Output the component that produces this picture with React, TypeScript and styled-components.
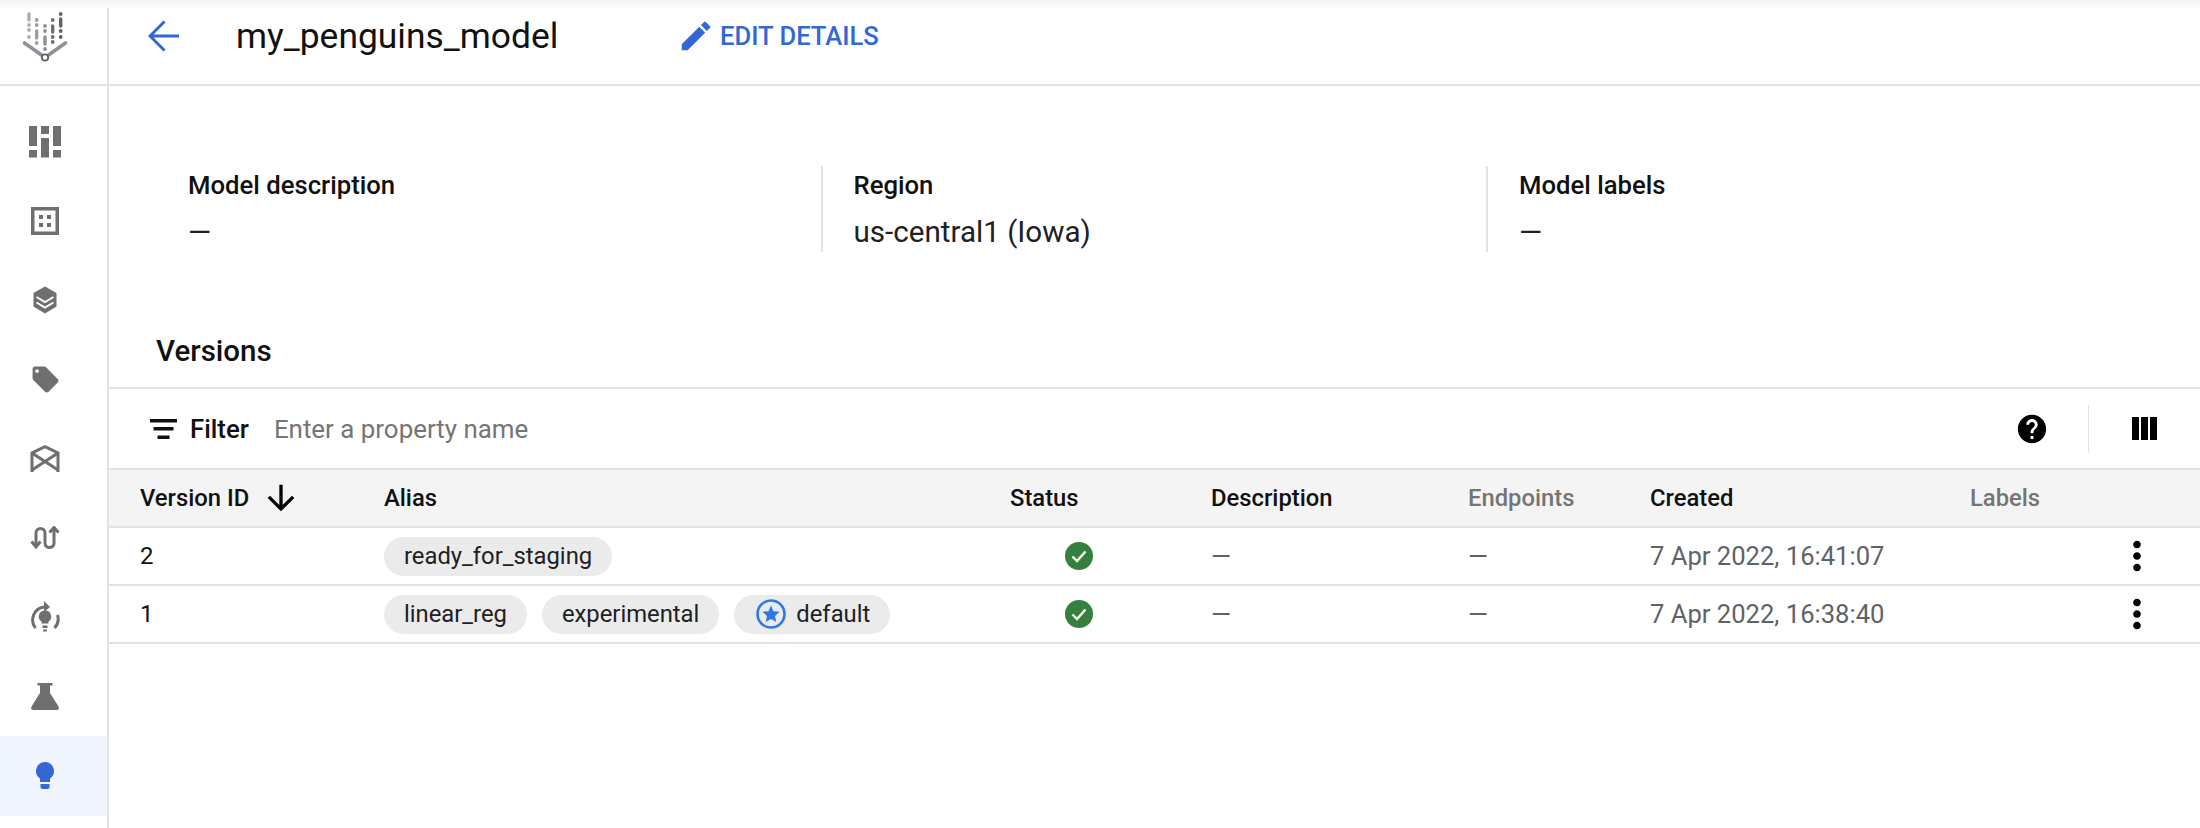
import React from 'react';
import styled, { createGlobalStyle } from 'styled-components';

const GlobalStyle = createGlobalStyle`
  html, body {
    margin: 0;
    padding: 0;
    background: #fff;
    font-family: Roboto, "Liberation Sans", sans-serif;
    color: #111;
  }
`;

const Page = styled.div`
  display: flex;
  width: 2200px;
  height: 828px;
  overflow: hidden;
  position: relative;
  background: #fff;

  &::before {
    content: '';
    position: absolute;
    top: 0;
    left: 0;
    right: 0;
    height: 8px;
    background: linear-gradient(#f3f3f3, #fff);
  }
`;

const Sidebar = styled.nav`
  width: 107px;
  flex: none;
  border-right: 2px solid #e2e2e2;
  display: flex;
  flex-direction: column;
`;

const LogoBox = styled.div`
  height: 86px;
  box-sizing: border-box;
  border-bottom: 2px solid #e2e2e2;
  padding-top: 12px;
  position: relative;
`;

const NavList = styled.div`
  padding-top: 16px;
  display: flex;
  flex-direction: column;
`;

const NavItem = styled.div<{ $active?: boolean }>`
  height: 79.3px;
  box-sizing: border-box;
  padding-right: 17px;
  display: flex;
  align-items: center;
  justify-content: center;
  color: ${(p) => (p.$active ? '#3367d6' : '#6f6f6f')};
  background: ${(p) => (p.$active ? '#f0f4fd' : 'transparent')};
`;

const Main = styled.main`
  flex: 1;
  min-width: 0;
  display: flex;
  flex-direction: column;
`;

const Header = styled.header`
  height: 86px;
  box-sizing: border-box;
  border-bottom: 2px solid #e2e2e2;
  display: flex;
  align-items: center;
  padding: 0 0 12px 39px;
  position: relative;
`;

const BackIcon = styled.svg`
  width: 32px;
  height: 32px;
  fill: none;
  stroke: #3367d6;
  stroke-width: 3;
  flex: none;
`;

const Title = styled.h1`
  margin: 0 0 0 56px;
  font-size: 35.4px;
  font-weight: 400;
  color: #111;
  width: 441px;
  white-space: nowrap;
`;

const EditButton = styled.div`
  display: flex;
  align-items: center;
  gap: 5px;
  color: #3367d6;
  font-size: 25.6px;
  font-weight: 500;
  white-space: nowrap;
  svg {
    width: 38px;
    height: 38px;
    fill: #3367d6;
  }
`;

const Details = styled.section`
  display: flex;
  margin: 80px 0 0 48px;
  height: 86px;
`;

const DetailColumn = styled.div<{ $first?: boolean }>`
  width: 667.5px;
  box-sizing: border-box;
  padding-left: 31px;
  border-left: ${(p) => (p.$first ? '2px solid transparent' : '2px solid #e2e2e2')};
  margin-left: -2px;
  display: flex;
  flex-direction: column;
`;

const DetailLabel = styled.div`
  font-size: 25.7px;
  font-weight: 500;
  line-height: 32px;
  margin-top: 3px;
  color: #111;
`;

const DetailValue = styled.div`
  font-size: 29.6px;
  line-height: 32px;
  margin-top: 15px;
  color: #202124;
`;

const SectionTitle = styled.h2`
  margin: 0;
  padding: 82px 0 0 47px;
  height: 53px;
  font-size: 29.5px;
  line-height: 34px;
  font-weight: 500;
  color: #111;
`;

const FilterBar = styled.div`
  height: 83px;
  box-sizing: border-box;
  border-top: 2px solid #e2e2e2;
  border-bottom: 2px solid #e2e2e2;
  display: flex;
  align-items: center;
  padding-left: 41px;
  position: relative;
`;

const FilterIcon = styled.svg`
  width: 27px;
  height: 20px;
  fill: #111;
  flex: none;
`;

const FilterLabel = styled.span`
  margin-left: 13px;
  font-size: 25.8px;
  font-weight: 500;
  color: #111;
`;

const FilterInput = styled.span`
  margin-left: 25px;
  font-size: 25.9px;
  color: #757575;
  flex: 1;
`;

const HelpIcon = styled.svg`
  width: 34px;
  height: 34px;
  fill: #000;
  flex: none;
`;

const ToolbarDivider = styled.div`
  width: 1px;
  height: 48px;
  background: #e2e2e2;
  margin: 0 43px 0 39px;
`;

const ColumnsIcon = styled.svg`
  width: 25px;
  height: 23px;
  fill: #000;
  flex: none;
  margin-right: 43px;
`;

const Row = styled.div<{ $head?: boolean }>`
  display: grid;
  grid-template-columns: 244px 626px 201px 257px 182px 320px 140px 54px;
  align-items: center;
  height: 58px;
  box-sizing: border-box;
  padding-left: 31px;
  border-bottom: 2px solid #e2e2e2;
  background: ${(p) => (p.$head ? '#f4f4f4' : '#fff')};
`;

const HeadCell = styled.div<{ $muted?: boolean }>`
  font-weight: 500;
  font-size: 23.8px;
  color: ${(p) => (p.$muted ? '#757575' : '#111')};
  display: flex;
  align-items: center;
  gap: 12px;
  svg {
    width: 40px;
    height: 40px;
    fill: #000;
  }
`;

const Cell = styled.div<{ $muted?: boolean }>`
  font-size: ${(p) => (p.$muted ? '25.6px' : '24px')};
  color: ${(p) => (p.$muted ? '#5f6368' : '#111')};
  white-space: nowrap;
`;

const StatusCell = styled.div`
  padding-left: 55px;
  display: flex;
  svg {
    width: 28px;
    height: 28px;
  }
`;

const Chips = styled.div`
  display: flex;
  gap: 15px;
`;

const Chip = styled.span`
  display: inline-flex;
  align-items: center;
  height: 39px;
  padding: 0 20px;
  border-radius: 20px;
  background: #ebebeb;
  font-size: 23.8px;
  color: #202124;
  white-space: nowrap;
  gap: 10px;
`;

const DefaultChip = styled(Chip)`
  padding-left: 22px;
  svg {
    width: 30px;
    height: 30px;
  }
`;

const Kebab = styled.svg`
  width: 46px;
  height: 46px;
  fill: #000;
  justify-self: center;
`;

const LogoMark = styled.svg`
  display: block;
  width: 90px;
  height: 58px;
`;

const dash = '—';

const logoColumns = [
  { x: 29, color: '#a9adb1', dots: [25, 30, 37], bar: [14, 20] },
  { x: 36.7, color: '#9a9ea2', dots: [20, 25, 43], bar: [31, 38] },
  { x: 45, color: '#8e9296', dots: [26, 31, 49], bar: [37, 44] },
  { x: 52.7, color: '#6d7074', dots: [20, 37, 42], bar: [26, 32] },
  { x: 60.7, color: '#5f6368', dots: [14, 31, 37], bar: [19, 26] },
];

function Logo() {
  return (
    <LogoMark viewBox="0 12 90 58">
      {logoColumns.map((col) => (
        <g key={col.x} fill={col.color} stroke={col.color}>
          {col.dots.map((y) => (
            <circle key={y} cx={col.x} cy={y} r="1.9" stroke="none" />
          ))}
          <line x1={col.x} x2={col.x} y1={col.bar[0]} y2={col.bar[1]} strokeWidth="3.4" strokeLinecap="round" />
        </g>
      ))}
      <path d="M24.5 43 L41.5 55" stroke="#8e9196" strokeWidth="3.6" strokeLinecap="round" fill="none" />
      <path d="M48.5 55 L65.5 43" stroke="#8e9196" strokeWidth="3.6" strokeLinecap="round" fill="none" />
      <circle cx="45" cy="57.5" r="3.2" fill="#fff" stroke="#5f6368" strokeWidth="1.8" />
    </LogoMark>
  );
}

function BoardsIcon() {
  return (
    <svg width="32" height="32" viewBox="0 0 32 32" fill="currentColor">
      <rect x="0" y="0" width="8" height="20" />
      <rect x="0" y="24" width="8" height="7.5" />
      <rect x="12" y="0" width="8" height="8" />
      <rect x="12" y="12" width="8" height="19.5" />
      <rect x="24" y="0" width="8" height="20" />
      <rect x="24" y="24" width="8" height="7.5" />
    </svg>
  );
}

function GridIcon() {
  return (
    <svg width="28" height="28" viewBox="0 0 28 28" fill="currentColor">
      <path fillRule="evenodd" d="M0 0h28v28H0zM3.5 3.5v21h21v-21z" />
      <rect x="8" y="8" width="4" height="4" />
      <rect x="16" y="8" width="4" height="4" />
      <rect x="8" y="16" width="4" height="4" />
      <rect x="16" y="16" width="4" height="4" />
    </svg>
  );
}

function LayersIcon() {
  return (
    <svg width="24" height="28" viewBox="0 0 24 28" fill="currentColor">
      <path d="M12 0.5 L23.5 7 V20.5 L12 27.5 L0.5 20.5 V7 Z" />
      <path d="M3.5 11 L12 16 L20.5 11 M3.5 16.5 L12 21.5 L20.5 16.5" fill="none" stroke="#fff" strokeWidth="2" />
    </svg>
  );
}

function TagIcon() {
  return (
    <svg width="31" height="31" viewBox="0 0 24 24" fill="currentColor">
      <path d="M21.41 11.58l-9-9C12.05 2.22 11.55 2 11 2H4c-1.1 0-2 .9-2 2v7c0 .55.22 1.05.59 1.42l9 9c.36.36.86.58 1.41.58.55 0 1.05-.22 1.41-.59l7-7c.37-.36.59-.86.59-1.41 0-.55-.23-1.06-.59-1.42zM5.5 7C4.67 7 4 6.33 4 5.5S4.67 4 5.5 4 7 4.67 7 5.5 6.33 7 5.5 7z" />
    </svg>
  );
}

function EndpointIcon() {
  return (
    <svg width="30" height="28" viewBox="0 0 30 28" fill="none" stroke="currentColor" strokeWidth="3">
      <path d="M2 27 V8 L15 1.7 L28 8 V27" />
      <path d="M2 8 L28 25 M28 8 L2 25" />
    </svg>
  );
}

function PipelineIcon() {
  return (
    <svg width="30" height="24" viewBox="0 0 30 24" fill="none" stroke="currentColor" strokeWidth="3">
      <path d="M6 20 V7 C6 1 15 1 15 7 V17 C15 23 24 23 24 17 V3" />
      <path d="M1.5 15.5 L6 21 L10.5 15.5 M19.5 6.5 L24 1.5 L28.5 6.5" />
    </svg>
  );
}

function TrainingIcon() {
  return (
    <svg width="30" height="32" viewBox="0 0 30 32" fill="currentColor">
      <path d="M5.5 27 A13 13 0 0 1 14 6 M24.5 27 A13 13 0 0 0 27.5 14" fill="none" stroke="currentColor" strokeWidth="3" />
      <path d="M14 0 L20 6 L14 11 Z" />
      <path d="M15 9.5 a6 6 0 0 1 3.5 11 v2 h-7 v-2 a6 6 0 0 1 3.5 -11z" />
      <rect x="12.5" y="24.5" width="5" height="2.5" />
      <rect x="13" y="28.5" width="4" height="2" />
    </svg>
  );
}

function FlaskIcon() {
  return (
    <svg width="28" height="27" viewBox="0 0 28 27" fill="currentColor">
      <path d="M6.5 0 H21.5 V2.5 H19 V10 L27.5 23.5 Q28.8 27 26 27 H2 Q-.8 27 .5 23.5 L9 10 V2.5 H6.5Z" />
    </svg>
  );
}

function BulbIcon() {
  return (
    <svg width="18" height="28" viewBox="0 0 18 28" fill="currentColor">
      <path d="M9 0 a9 9 0 0 1 5 16.4 V20 H4 v-3.6 A9 9 0 0 1 9 0z" />
      <path d="M4.5 22 h9 v3 a2 2 0 0 1 -2 2 h-5 a2 2 0 0 1 -2 -2z" />
    </svg>
  );
}

function StatusOk() {
  return (
    <svg viewBox="0 0 28 28">
      <circle cx="14" cy="14" r="14" fill="#34803c" />
      <path d="M7.5 14.5 L12 19 L20.5 9.5" fill="none" stroke="#fff" strokeWidth="2.4" />
    </svg>
  );
}

function StarBadge() {
  return (
    <svg viewBox="0 0 30 30">
      <circle cx="15" cy="15" r="13.5" fill="none" stroke="#2f78e6" strokeWidth="2.6" />
      <path d="M15 6.5 L17.5 12.2 L23.6 12.8 L19 17 L20.3 23 L15 19.9 L9.7 23 L11 17 L6.4 12.8 L12.5 12.2 Z" fill="#2f78e6" />
    </svg>
  );
}

function MoreIcon() {
  return (
    <Kebab viewBox="0 0 24 24">
      <path d="M12 8c1.1 0 2-.9 2-2s-.9-2-2-2-2 .9-2 2 .9 2 2 2zm0 2c-1.1 0-2 .9-2 2s.9 2 2 2 2-.9 2-2-.9-2-2-2zm0 6c-1.1 0-2 .9-2 2s.9 2 2 2 2-.9 2-2-.9-2-2-2z" />
    </Kebab>
  );
}

const versions = [
  { id: '2', aliases: ['ready_for_staging'], isDefault: false, created: '7 Apr 2022, 16:41:07' },
  { id: '1', aliases: ['linear_reg', 'experimental'], isDefault: true, created: '7 Apr 2022, 16:38:40' },
];

export default function App() {
  return (
    <Page>
      <GlobalStyle />
      <Sidebar>
        <LogoBox>
          <Logo />
        </LogoBox>
        <NavList>
          <NavItem><BoardsIcon /></NavItem>
          <NavItem><GridIcon /></NavItem>
          <NavItem><LayersIcon /></NavItem>
          <NavItem><TagIcon /></NavItem>
          <NavItem><EndpointIcon /></NavItem>
          <NavItem><PipelineIcon /></NavItem>
          <NavItem><TrainingIcon /></NavItem>
          <NavItem><FlaskIcon /></NavItem>
          <NavItem $active><BulbIcon /></NavItem>
        </NavList>
      </Sidebar>
      <Main>
        <Header>
          <BackIcon viewBox="0 0 32 32">
            <path d="M31 16 H3 M16.5 1.5 L2 16 L16.5 30.5" />
          </BackIcon>
          <Title>my_penguins_model</Title>
          <EditButton>
            <svg viewBox="0 0 24 24">
              <path d="M3 17.25V21h3.75L17.81 9.94l-3.75-3.75L3 17.25zM20.71 7.04c.39-.39.39-1.02 0-1.41l-2.34-2.34c-.39-.39-1.02-.39-1.41 0l-1.83 1.83 3.75 3.75 1.83-1.83z" />
            </svg>
            EDIT DETAILS
          </EditButton>
        </Header>
        <Details>
          <DetailColumn $first>
            <DetailLabel>Model description</DetailLabel>
            <DetailValue>{dash}</DetailValue>
          </DetailColumn>
          <DetailColumn>
            <DetailLabel>Region</DetailLabel>
            <DetailValue>us-central1 (Iowa)</DetailValue>
          </DetailColumn>
          <DetailColumn>
            <DetailLabel>Model labels</DetailLabel>
            <DetailValue>{dash}</DetailValue>
          </DetailColumn>
        </Details>
        <SectionTitle>Versions</SectionTitle>
        <FilterBar>
          <FilterIcon viewBox="0 0 27 20">
            <rect x="0" y="0" width="27" height="3.5" />
            <rect x="3.5" y="8" width="20" height="3.5" />
            <rect x="7.5" y="16.5" width="12" height="3.5" />
          </FilterIcon>
          <FilterLabel>Filter</FilterLabel>
          <FilterInput>Enter a property name</FilterInput>
          <HelpIcon viewBox="0 0 24 24">
            <path d="M12 2C6.48 2 2 6.48 2 12s4.48 10 10 10 10-4.48 10-10S17.52 2 12 2zm1 17h-2v-2h2v2zm2.07-7.75l-.9.92C13.45 12.9 13 13.5 13 15h-2v-.5c0-1.1.45-2.1 1.17-2.83l1.24-1.26c.37-.36.59-.86.59-1.41 0-1.1-.9-2-2-2s-2 .9-2 2H8c0-2.21 1.79-4 4-4s4 1.79 4 4c0 .88-.36 1.68-.93 2.25z" />
          </HelpIcon>
          <ToolbarDivider />
          <ColumnsIcon viewBox="0 0 25 23">
            <rect x="0" y="0" width="7" height="23" />
            <rect x="9" y="0" width="7" height="23" />
            <rect x="18" y="0" width="7" height="23" />
          </ColumnsIcon>
        </FilterBar>
        <Row $head>
          <HeadCell>
            Version ID
            <svg viewBox="0 0 24 24">
              <path d="M20 12l-1.41-1.41L13 16.17V4h-2v12.17l-5.58-5.59L4 12l8 8 8-8z" />
            </svg>
          </HeadCell>
          <HeadCell>Alias</HeadCell>
          <HeadCell>Status</HeadCell>
          <HeadCell>Description</HeadCell>
          <HeadCell $muted>Endpoints</HeadCell>
          <HeadCell>Created</HeadCell>
          <HeadCell $muted>Labels</HeadCell>
          <div />
        </Row>
        {versions.map((v) => (
          <Row key={v.id}>
            <Cell>{v.id}</Cell>
            <Chips>
              {v.aliases.map((a) => (
                <Chip key={a}>{a}</Chip>
              ))}
              {v.isDefault && (
                <DefaultChip>
                  <StarBadge />
                  default
                </DefaultChip>
              )}
            </Chips>
            <StatusCell>
              <StatusOk />
            </StatusCell>
            <Cell $muted>{dash}</Cell>
            <Cell $muted>{dash}</Cell>
            <Cell $muted>{v.created}</Cell>
            <div />
            <MoreIcon />
          </Row>
        ))}
      </Main>
    </Page>
  );
}
